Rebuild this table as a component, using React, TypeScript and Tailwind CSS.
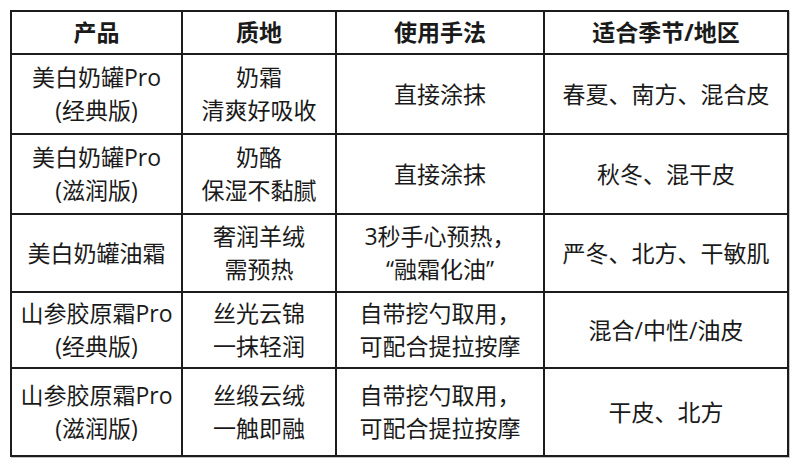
import React from "react";

const header = ["产品", "质地", "使用手法", "适合季节/地区"];

const rows: string[][][] = [
  [["美白奶罐Pro", "(经典版)"], ["奶霜", "清爽好吸收"], ["直接涂抹"], ["春夏、南方、混合皮"]],
  [["美白奶罐Pro", "(滋润版)"], ["奶酪", "保湿不黏腻"], ["直接涂抹"], ["秋冬、混干皮"]],
  [["美白奶罐油霜"], ["奢润羊绒", "需预热"], ["3秒手心预热，", "“融霜化油”"], ["严冬、北方、干敏肌"]],
  [["山参胶原霜Pro", "(经典版)"], ["丝光云锦", "一抹轻润"], ["自带挖勺取用，", "可配合提拉按摩"], ["混合/中性/油皮"]],
  [["山参胶原霜Pro", "(滋润版)"], ["丝缎云绒", "一触即融"], ["自带挖勺取用，", "可配合提拉按摩"], ["干皮、北方"]],
];

export default function App() {
  return (
    <div
      className="w-[800px] h-[468px] bg-white"
      style={{ fontFamily: '"Open Sans", "Noto Sans CJK SC", sans-serif' }}
    >
      <div className="pt-[10px] pl-[10px]">
        <div className="grid w-fit grid-cols-[171px_154px_208px_244px] grid-rows-[43px_80px_80px_78px_76px_88px] border-t-2 border-l-2 border-[#1c1c1c] shadow-[1px_1px_0_#c4c4c4] text-[#1a1a1a] text-[23px] leading-[33px]">
          {header.map((h, i) => (
            <div
              key={i}
              className="flex items-center justify-center border-r-2 border-b-2 border-[#1c1c1c] font-bold"
            >
              {h}
            </div>
          ))}
          {rows.map((r, ri) =>
            r.map((cell, ci) => (
              <div
                key={`${ri}-${ci}`}
                className="flex flex-col items-center justify-center text-center border-r-2 border-b-2 border-[#1c1c1c]"
              >
                {cell.map((line, li) => (
                  <div key={li} className="whitespace-nowrap">
                    {line}
                  </div>
                ))}
              </div>
            ))
          )}
        </div>
      </div>
    </div>
  );
}
